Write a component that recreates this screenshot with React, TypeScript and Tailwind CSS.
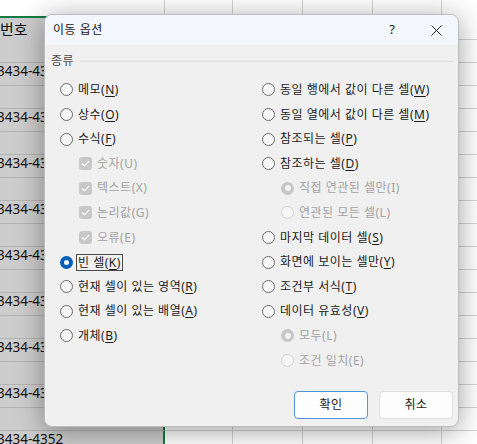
import React from 'react';

type Item = {
  t: string;
  k: string;
  kind?: 'radio' | 'check';
  sub?: boolean;
  disabled?: boolean;
  checked?: boolean;
  focus?: boolean;
};

const leftItems: Item[] = [
  { t: '메모', k: 'N' },
  { t: '상수', k: 'O' },
  { t: '수식', k: 'F' },
  { t: '숫자', k: 'U', kind: 'check', sub: true, disabled: true, checked: true },
  { t: '텍스트', k: 'X', kind: 'check', sub: true, disabled: true, checked: true },
  { t: '논리값', k: 'G', kind: 'check', sub: true, disabled: true, checked: true },
  { t: '오류', k: 'E', kind: 'check', sub: true, disabled: true, checked: true },
  { t: '빈 셀', k: 'K', checked: true, focus: true },
  { t: '현재 셀이 있는 영역', k: 'R' },
  { t: '현재 셀이 있는 배열', k: 'A' },
  { t: '개체', k: 'B' },
];

const rightItems: Item[] = [
  { t: '동일 행에서 값이 다른 셀', k: 'W' },
  { t: '동일 열에서 값이 다른 셀', k: 'M' },
  { t: '참조되는 셀', k: 'P' },
  { t: '참조하는 셀', k: 'D' },
  { t: '직접 연관된 셀만', k: 'I', sub: true, disabled: true, checked: true },
  { t: '연관된 모든 셀', k: 'L', sub: true, disabled: true },
  { t: '마지막 데이터 셀', k: 'S' },
  { t: '화면에 보이는 셀만', k: 'Y' },
  { t: '조건부 서식', k: 'T' },
  { t: '데이터 유효성', k: 'V' },
  { t: '모두', k: 'L', sub: true, disabled: true, checked: true },
  { t: '조건 일치', k: 'E', sub: true, disabled: true },
];

function Radio({ checked, disabled }: { checked?: boolean; disabled?: boolean }) {
  if (checked && !disabled) {
    return (
      <span className="flex h-[13px] w-[13px] shrink-0 items-center justify-center rounded-full bg-[#005fb8]">
        <span className="h-[5px] w-[5px] rounded-full bg-white" />
      </span>
    );
  }
  if (checked && disabled) {
    return (
      <span className="flex h-[13px] w-[13px] shrink-0 items-center justify-center rounded-full bg-[#c6c6c6]">
        <span className="h-[6px] w-[6px] rounded-full bg-[#f4f4f4]" />
      </span>
    );
  }
  if (disabled) {
    return <span className="h-[13px] w-[13px] shrink-0 rounded-full border border-[#d2d2d2] bg-[#f6f6f6]" />;
  }
  return <span className="h-[13px] w-[13px] shrink-0 rounded-full border border-[#6b6b6b] bg-[#f7f7f7]" />;
}

function Check() {
  return (
    <span className="flex h-[13px] w-[13px] shrink-0 items-center justify-center rounded-[3px] bg-[#c8c8c8]">
      <svg width="13" height="13" viewBox="0 0 13 13">
        <path d="M3.3 6.8 L5.4 8.8 L9.7 4.4" fill="none" stroke="#ffffff" strokeWidth="1.2" strokeLinecap="round" strokeLinejoin="round" />
      </svg>
    </span>
  );
}

function Row({ item }: { item: Item }) {
  const color = item.disabled ? 'text-[#a3a3a3]' : 'text-[#1b1b1b]';
  const label = (
    <span className={`whitespace-nowrap tracking-[0.5px] ${color}`}>
      {item.t}(
      {item.disabled ? item.k : <span className="underline underline-offset-[2px]">{item.k}</span>})
    </span>
  );
  return (
    <div className={`flex h-[24.6px] items-center gap-[5px] ${item.sub ? 'pl-[19px]' : ''}`}>
      {item.kind === 'check' ? <Check /> : <Radio checked={item.checked} disabled={item.disabled} />}
      {item.focus ? (
        <span className="-ml-[2px] border border-[#4a4a4a] px-[1px] leading-[15px]">{label}</span>
      ) : (
        label
      )}
    </div>
  );
}

const colWidths = [68, 70, 70, 69, 70];

function SheetRow({ h, idx }: { h: number; idx: number }) {
  const isTop = idx === 0;
  const isHeader = idx === 1;
  const hasText = idx >= 2 && (idx - 2) % 2 === 1;
  return (
    <div className="flex shrink-0" style={{ height: h }}>
      <div
        className={
          isTop
            ? 'w-[165px] shrink-0 border-r border-[#d4d4d4] bg-white'
            : `relative w-[165px] shrink-0 border-r-2 border-[#107c41] bg-[#cdcdcd] ${isHeader ? 'border-t-2' : 'border-b border-b-[#b3b3b3]'}`
        }
      >
        {isHeader && (
          <div className="flex h-full items-center text-[15px] text-[#111]">번호</div>
        )}
        {hasText && (
          <div className="-ml-[3px] whitespace-nowrap text-[13.5px] leading-[16px] text-[#111]">3434-4352</div>
        )}
      </div>
      {colWidths.map((w, i) => (
        <div
          key={i}
          className={`shrink-0 border-r border-[#d4d4d4] bg-white ${isTop ? '' : 'border-b'}`}
          style={{ width: w }}
        />
      ))}
    </div>
  );
}

export default function App() {
  const rowHeights = [16, 24, ...Array.from({ length: 18 }, () => 23)];
  return (
    <div className="relative h-[444px] w-[477px] overflow-hidden bg-white font-['Noto_Sans','Noto_Sans_CJK_KR',sans-serif]">
      <div className="flex flex-col">
        {rowHeights.map((h, i) => (
          <SheetRow key={i} h={h} idx={i} />
        ))}
      </div>

      <div className="absolute left-[44px] top-[14px] flex h-[413px] w-[415px] flex-col overflow-hidden rounded-[8px] border border-[#bdbdbd] bg-[#f0f0f0] shadow-[0_4px_28px_rgba(0,0,0,0.38)]">
        <div className="flex h-[30px] shrink-0 items-center bg-[#f3f6fa] pl-[8px] text-[12px] text-[#1a1a1a]">
          <span className="flex-1 tracking-[0.5px]">이동 옵션</span>
          <span className="mr-[36px] text-[13px] text-[#222]">?</span>
          <span className="mr-[16px] flex items-center">
            <svg width="11" height="11" viewBox="0 0 11 11">
              <path d="M0.5 0.5 L10.5 10.5 M10.5 0.5 L0.5 10.5" stroke="#262626" strokeWidth="1" />
            </svg>
          </span>
        </div>

        <div className="flex flex-1 flex-col pl-[6px] pr-[5px] pt-[8px] text-[12px]">
          <div className="flex h-[16px] items-center gap-[6px]">
            <span className="text-[12px] tracking-[0.5px] text-[#4d4d4d]">종류</span>
            <span className="h-px flex-1 bg-[#dadada]" />
          </div>
          <div className="mt-[8.7px] flex pl-[9px]">
            <div className="w-[202px]">
              {leftItems.map((it, i) => (
                <Row key={i} item={it} />
              ))}
            </div>
            <div className="flex-1">
              {rightItems.map((it, i) => (
                <Row key={i} item={it} />
              ))}
            </div>
          </div>
        </div>

        <div className="flex shrink-0 justify-end gap-[11px] pb-[7px] pr-[5px] text-[12px] text-[#1b1b1b]">
          <button className="flex h-[28px] w-[74px] items-center justify-center rounded-[4px] border border-[#4f96dc] bg-[#fdfdfd] tracking-[0.5px]">
            확인
          </button>
          <button className="flex h-[28px] w-[74px] items-center justify-center rounded-[4px] border border-[#dedede] bg-[#fdfdfd] tracking-[0.5px]">
            취소
          </button>
        </div>
      </div>
    </div>
  );
}
